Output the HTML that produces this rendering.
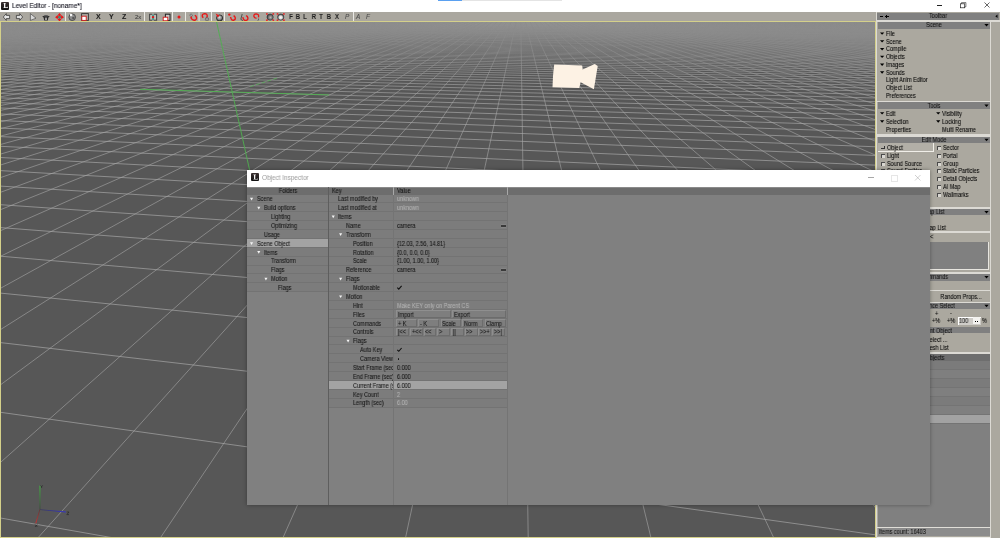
<!DOCTYPE html><html><head><meta charset='utf-8'><style>
html,body{margin:0;padding:0;width:1000px;height:538px;overflow:hidden;background:#fff;}
body{position:relative;font-family:"Liberation Sans",sans-serif;}
.t{position:absolute;white-space:nowrap;line-height:10px;font-family:"Liberation Sans",sans-serif;will-change:transform;-webkit-text-stroke:0.07px currentColor;}
.b{position:absolute;}
svg{position:absolute;left:0;top:0;}
</style></head><body>
<div class=b style='left:0px;top:0px;width:1000px;height:12px;background:#fff;'></div>
<div class=b style='left:437.6px;top:0px;width:24.799999999999955px;height:0.9px;background:#5aa0f0;'></div>
<div class=b style='left:462.4px;top:0px;width:100.0px;height:0.9px;background:#e4e4e4;'></div>
<div class=b style='left:1px;top:1.5px;width:8px;height:8px;background:linear-gradient(#3a3030,#111);border-radius:1px'></div>
<svg width=1000 height=538><path d='M3.4 3 L5.9 3 L5.9 3.5 L5.3 3.6 L5.3 7.3 L7.4 7.3 L7.6 6.6 L7.9 6.6 L7.9 8 L3.4 8 L3.4 7.6 L4 7.5 L4 3.6 L3.4 3.5Z' fill='#f4f4f4'/></svg>
<div class=t style='left:12.00px;top:0.80px;font-size:6.99px;color:#10101c;transform:scaleX(0.93);transform-origin:left;-webkit-text-stroke:0.1px currentColor;'>Level Editor - [noname*]</div>
<div class=b style='left:937px;top:4.9px;width:5px;height:0.6999999999999993px;background:#222;'></div>
<svg width=1000 height=538><rect x='960.4' y='3.8' width='4.3' height='4' fill='none' stroke='#222' stroke-width='0.7'/><path d='M961.5 3.8 L961.5 2.6 L965.9 2.6 L965.9 6.8 L964.7 6.8' fill='none' stroke='#222' stroke-width='0.6'/></svg>
<svg width=1000 height=538 style='left:0;top:0'><path d='M984.5 2.5 L989.5 7.5 M989.5 2.5 L984.5 7.5' stroke='#000' stroke-width='0.6'/></svg>
<div class=b style='left:0px;top:12px;width:877px;height:9px;background:#aaa79f;'></div>
<svg width=1000 height=538><rect x='65.1' y='12' width='0.9' height='9' fill='#f2f1ee'/><rect x='144.1' y='12' width='0.9' height='9' fill='#f2f1ee'/><rect x='172.1' y='12' width='0.9' height='9' fill='#f2f1ee'/><rect x='185.1' y='12' width='0.9' height='9' fill='#f2f1ee'/><rect x='198.6' y='12' width='0.9' height='9' fill='#f2f1ee'/><rect x='211.1' y='12' width='0.9' height='9' fill='#f2f1ee'/><rect x='224.1' y='12' width='0.9' height='9' fill='#f2f1ee'/><rect x='353.1' y='12' width='0.9' height='9' fill='#f2f1ee'/><path d='M3.3 17 L6.3 13.6 L6.3 15.4 L9.6 15.4 L9.6 18.6 L6.3 18.6 L6.3 20.4Z' fill='#e6e6e6' stroke='#2a2a2a' stroke-width='0.7' stroke-linejoin='round'/><path d='M22.7 17 L19.7 13.6 L19.7 15.4 L16.4 15.4 L16.4 18.6 L19.7 18.6 L19.7 20.4Z' fill='#dcdcdc' stroke='#2a2a2a' stroke-width='0.7' stroke-linejoin='round'/><path d='M30.4 13.6 L30.4 20.4 L36 18.2Z' fill='#d8d8d8' stroke='#3a3a3a' stroke-width='0.6' stroke-linejoin='round'/><path d='M42.2 16.6 Q46 14.6 49.8 16.6 L48.4 17.6 L47.8 20.6 L44.2 20.6 L43.6 17.6Z' fill='#2a2a2a'/><rect x='45' y='17.6' width='2' height='2.4' fill='#9a9a9a'/><ellipse cx='46' cy='15.9' rx='2.2' ry='0.7' fill='#555'/><path d='M59.5 13 L61.6 15.4 L60.4 15.4 L60.4 16.3 L61.3 16.3 L61.3 15.1 L63.9 17.2 L61.3 19.3 L61.3 18.1 L60.4 18.1 L60.4 19 L61.6 19 L59.5 21.4 L57.4 19 L58.6 19 L58.6 18.1 L57.7 18.1 L57.7 19.3 L55.1 17.2 L57.7 15.1 L57.7 16.3 L58.6 16.3 L58.6 15.4 L57.4 15.4Z' fill='#e81818'/><circle cx='59.5' cy='17.2' r='1.25' fill='#2a9a8a'/><circle cx='72.2' cy='17.2' r='3.3' fill='#8a8a8a' stroke='#3a3a3a' stroke-width='0.8'/><rect x='70' y='14' width='2.2' height='2.2' fill='#f4f4f4'/><rect x='72.3' y='17' width='2' height='2' fill='#555'/><rect x='81.6' y='13.6' width='6.8' height='6.8' fill='none' stroke='#333' stroke-width='0.9'/><rect x='81.8' y='16.2' width='4.4' height='4.2' fill='#fff' stroke='#d01818' stroke-width='0.9'/></svg>
<div class=t style='left:95.9px;top:12.20px;font-size:7px;font-weight:bold;color:#1e1e1e;'>X</div>
<div class=t style='left:109.1px;top:12.20px;font-size:7px;font-weight:bold;color:#1e1e1e;'>Y</div>
<div class=t style='left:122px;top:12.20px;font-size:7px;font-weight:bold;color:#1e1e1e;'>Z</div>
<div class=t style='left:135px;top:12.30px;font-size:6px;font-weight:bold;color:#3a3a3a;font-weight:normal;'>2x</div>
<svg width=1000 height=538><path d='M152.2 14.2 L149.6 14.2 L149.6 20.2 L152.2 20.2 M153.8 14.2 L156.6 14.2 L156.6 20.2 L153.8 20.2' stroke='#4a4a4a' stroke-width='1.1' fill='none'/><path d='M151.1 15.2 L151.1 19.2 M155.1 15.2 L155.1 19.2' stroke='#d8d8d8' stroke-width='0.8'/><rect x='152.3' y='14.6' width='1.5' height='5.4' fill='#2a9a8a'/><circle cx='153' cy='17.1' r='1.2' fill='#e01818'/><rect x='165.4' y='14.2' width='4.6' height='6.2' fill='#c8c8c8' stroke='#222' stroke-width='1'/><rect x='163.2' y='17.2' width='4.6' height='3.6' fill='#fff' stroke='#d81818' stroke-width='0.9'/><path d='M175.4 17 L182.6 17 M179 13.8 L179 20.6' stroke='#9a9a9a' stroke-width='0.5'/><circle cx='179' cy='16.9' r='1.5' fill='#e81818'/><path d='M189.6 15.2 L191 13.8 L192.6 15.2 L191.4 16.8Z' fill='#a8a8a8' stroke='#555' stroke-width='0.6'/><path d='M191.8 16.6 L190.9 17.8 Q192.5 21.2 195.4 20 Q197.6 18.6 195.8 16 L194.8 15.2' stroke='#e81818' stroke-width='1.4' fill='none'/><path d='M206.2 17.8 L207.2 16.6 Q207.6 13.6 204.6 13.6 Q201.6 14 202.4 16.8 L203.4 17.6' stroke='#e81818' stroke-width='1.4' fill='none'/><circle cx='207' cy='19.2' r='1.7' fill='#9a9a9a' stroke='#555' stroke-width='0.6'/><defs><radialGradient id='sph' cx='0.45' cy='0.4' r='0.6'><stop offset='0' stop-color='#e0e0e0'/><stop offset='0.6' stop-color='#888'/><stop offset='1' stop-color='#333'/></radialGradient><radialGradient id='sph2' cx='0.5' cy='0.55' r='0.55'><stop offset='0' stop-color='#fff'/><stop offset='0.45' stop-color='#ddd'/><stop offset='0.8' stop-color='#555'/><stop offset='1' stop-color='#333'/></radialGradient><radialGradient id='sph3' cx='0.55' cy='0.55' r='0.6'><stop offset='0' stop-color='#bbb'/><stop offset='0.6' stop-color='#666'/><stop offset='1' stop-color='#222'/></radialGradient></defs><circle cx='219.6' cy='18' r='3.1' fill='url(#sph)' stroke='#2a2a2a' stroke-width='0.8'/><path d='M215.6 13.6 L219.6 15.6 L217.6 17.4Z' fill='#e81818'/><circle cx='229.3' cy='14.6' r='1.2' fill='#e81818'/><path d='M230.6 17 Q231.2 20.8 233.8 20.2 Q236.4 19.2 234.6 16.4 L233.6 15.6' stroke='#e81818' stroke-width='1.4' fill='none'/><path d='M242.2 14 L240.8 19.4 L243 20.6' stroke='#3a3a3a' stroke-width='0.8' fill='none'/><path d='M242.8 17.2 Q243.6 21 246.4 20.4 Q249 19.4 247.2 16.4 L246.2 15.4' stroke='#e81818' stroke-width='1.4' fill='none'/><path d='M258.4 17.4 Q259.4 14 256.2 13.8 Q253.4 14 254 16.8 Q254.6 18.4 256.6 18.2' stroke='#e81818' stroke-width='1.3' fill='none'/><path d='M258 18.6 L258.8 19 L257.8 20.8' stroke='#555' stroke-width='0.8' fill='none'/><rect x='266.5' y='13.4' width='7.2' height='7.2' rx='1.5' fill='#bdbdbd' opacity='0.5'/><circle cx='270.1' cy='17.1' r='3.2' fill='url(#sph3)' stroke='#333' stroke-width='0.5'/><circle cx='266.9' cy='13.9' r='0.95' fill='#e82828'/><circle cx='273.3' cy='13.9' r='0.95' fill='#e82828'/><circle cx='266.9' cy='20.3' r='0.95' fill='#e82828'/><circle cx='273.3' cy='20.3' r='0.95' fill='#e82828'/><rect x='277.1' y='13.4' width='7.2' height='7.2' rx='1.5' fill='#bdbdbd' opacity='0.5'/><circle cx='280.7' cy='17.1' r='3.2' fill='url(#sph2)' stroke='#333' stroke-width='0.5'/><circle cx='277.5' cy='13.9' r='0.95' fill='#e82828'/><circle cx='283.9' cy='13.9' r='0.95' fill='#e82828'/><circle cx='277.5' cy='20.3' r='0.95' fill='#e82828'/><circle cx='283.9' cy='20.3' r='0.95' fill='#e82828'/></svg>
<div class=t style='left:281px;width:20px;text-align:center;top:12.2px;font-size:6.6px;font-weight:bold;color:#1e1e1e;transform:scaleX(0.88);'>F</div>
<div class=t style='left:288.2px;width:20px;text-align:center;top:12.2px;font-size:6.6px;font-weight:bold;color:#1e1e1e;transform:scaleX(0.88);'>B</div>
<div class=t style='left:295.2px;width:20px;text-align:center;top:12.2px;font-size:6.6px;font-weight:bold;color:#1e1e1e;transform:scaleX(0.88);'>L</div>
<div class=t style='left:304px;width:20px;text-align:center;top:12.2px;font-size:6.6px;font-weight:bold;color:#1e1e1e;transform:scaleX(0.88);'>R</div>
<div class=t style='left:310.6px;width:20px;text-align:center;top:12.2px;font-size:6.6px;font-weight:bold;color:#1e1e1e;transform:scaleX(0.88);'>T</div>
<div class=t style='left:319px;width:20px;text-align:center;top:12.2px;font-size:6.6px;font-weight:bold;color:#1e1e1e;transform:scaleX(0.88);'>B</div>
<div class=t style='left:326.6px;width:20px;text-align:center;top:12.2px;font-size:6.6px;font-weight:bold;color:#1e1e1e;transform:scaleX(0.88);'>X</div>
<div class=t style='left:345.2px;top:12.40px;font-size:6.4px;font-weight:bold;color:#4a4a4a;font-style:italic;font-weight:normal;'>P</div>
<div class=t style='left:355.6px;top:12.40px;font-size:6.4px;font-weight:bold;color:#4a4a4a;font-style:italic;font-weight:normal;'>A</div>
<div class=t style='left:366px;top:12.40px;font-size:6.4px;font-weight:bold;color:#4a4a4a;font-style:italic;font-weight:normal;'>F</div>
<div class=b style='left:0px;top:21px;width:876px;height:517px;background:#d4d08a;'></div>
<div class=b style='left:1px;top:22px;width:874px;height:515px;background:#575757;'></div>
<div class=b style='left:876px;top:12px;width:1px;height:526px;background:#dcdad4;'></div>
<svg width=1000 height=538 style='left:0;top:0'><defs><clipPath id='vc'><rect x='1' y='22' width='874' height='515'/></clipPath></defs><g clip-path='url(#vc)'><path d='M735.7 21.5L876.5 22.1M699.1 21.5L876.5 22.3M662.6 21.5L876.5 22.5M626.2 21.5L876.5 22.7M590.0 21.5L876.5 22.9M554.0 21.5L876.5 23.0M518.0 21.5L876.5 23.2M482.2 21.5L876.5 23.4M446.6 21.5L876.5 23.6M411.0 21.5L876.5 23.8M375.6 21.5L876.5 24.0M340.4 21.5L876.5 24.2M305.3 21.5L876.5 24.4M270.3 21.5L876.5 24.7M235.4 21.5L876.5 24.9M200.7 21.5L876.5 25.1M166.1 21.5L876.5 25.3M131.6 21.5L876.5 25.5M97.3 21.5L876.5 25.8M63.0 21.5L876.5 26.0M29.0 21.5L876.5 26.3M10.3 21.6L876.5 26.5M6.0 21.8L876.5 26.8M1.6 21.9L876.5 27.0M0.5 22.1L876.5 27.3M0.5 22.3L876.5 27.6M0.5 22.5L876.5 27.8M0.5 22.8L876.5 28.1M0.5 23.0L876.5 28.4M0.5 23.2L876.5 28.7M0.5 23.4L876.5 29.0M0.5 23.7L876.5 29.3M0.5 23.9L876.5 29.6M0.5 24.2L876.5 29.9M0.5 24.4L876.5 30.3M0.5 24.7L876.5 30.6M0.5 24.9L876.5 30.9M0.5 25.2L876.5 31.3M0.5 25.5L876.5 31.6M0.5 25.8L876.5 32.0M0.5 26.0L876.5 32.4M0.5 26.3L876.5 32.8M0.5 26.6L876.5 33.2M0.5 27.0L876.5 33.6M0.5 27.3L876.5 34.0M0.5 27.6L876.5 34.4M0.5 27.9L876.5 34.8M0.5 28.3L876.5 35.3M0.5 28.6L876.5 35.8M0.5 29.0L876.5 36.2M0.5 29.4L876.5 36.7M0.5 29.7L876.5 37.2M0.5 30.1L876.5 37.7M0.5 30.5L876.5 38.2M0.5 31.0L876.5 38.8M0.5 31.4L876.5 39.3M0.5 31.8L876.5 39.9M0.5 32.3L876.5 40.5M0.5 32.8L876.5 41.1M0.5 33.2L876.5 41.8M0.5 33.7L876.5 42.4M0.5 34.3L876.5 43.1M0.5 34.8L876.5 43.8M0.5 35.3L876.5 44.5M0.5 35.9L876.5 45.2M0.5 36.5L876.5 46.0M0.5 37.1L876.5 46.8M0.5 37.7L876.5 47.6M0.5 38.4L876.5 48.5M0.5 39.1L876.5 49.3M0.5 39.8L876.5 50.2M0.5 40.5L876.5 51.2M0.5 41.3L876.5 52.2M0.5 42.1L876.5 53.2M0.5 42.9L876.5 54.3M0.5 43.7L876.5 55.4M0.5 44.6L876.5 56.6M0.5 45.6L876.5 57.8M0.5 46.5L876.5 59.0M0.5 47.5L876.5 60.4M0.5 48.6L876.5 61.8M0.5 49.7L876.5 63.2M0.5 50.9L876.5 64.7M0.5 52.1L876.5 66.3M0.5 53.4L876.5 68.0M0.5 54.8L876.5 69.8M0.5 56.2L876.5 71.7M0.5 57.7L876.5 73.6M0.5 59.3L876.5 75.7M0.5 61.0L876.5 77.9M0.5 62.8L876.5 80.3M0.5 64.7L876.5 82.7M0.5 66.8L876.5 85.4M0.5 69.0L876.5 88.2M0.5 71.3L876.5 91.2M0.5 73.8L876.5 94.5M0.5 76.4L876.5 98.0M0.5 79.3L876.5 101.7M0.5 82.4L876.5 105.8M0.5 85.8L876.5 110.2M0.5 89.5L876.5 114.9M0.5 93.5L876.5 120.1M0.5 97.9L876.5 125.9M0.5 102.7L876.5 132.1M0.5 108.0L876.5 139.1M0.5 114.0L876.5 146.8M0.5 120.6L876.5 155.5M0.5 128.1L876.5 165.2M0.5 136.6L876.5 176.2M0.5 146.3L876.5 188.8M0.5 157.5L876.5 203.4M0.5 170.6L876.5 220.5M0.5 186.1L876.5 240.6M0.5 204.7L876.5 264.9M0.5 227.6L876.5 294.6M0.5 256.2L876.5 331.8M0.5 293.1L876.5 379.9M0.5 342.6L876.5 444.3M0.5 412.3L876.5 535.0M0.5 518.0L111.2 537.5' stroke='#b4b4b4' stroke-width='0.6' fill='none'/><path d='M12.5 21.5L0.5 22.0M16.9 21.5L0.5 22.2M21.3 21.5L0.5 22.3M25.6 21.5L0.5 22.5M30.0 21.5L0.5 22.7M34.4 21.5L0.5 22.9M38.8 21.5L0.5 23.1M43.2 21.5L0.5 23.3M47.6 21.5L0.5 23.5M52.0 21.5L0.5 23.7M56.4 21.5L0.5 23.9M60.8 21.5L0.5 24.1M65.2 21.5L0.5 24.4M69.6 21.5L0.5 24.6M74.0 21.5L0.5 24.8M78.4 21.5L0.5 25.1M82.8 21.5L0.5 25.3M87.2 21.5L0.5 25.5M91.6 21.5L0.5 25.8M96.0 21.5L0.5 26.0M100.4 21.5L0.5 26.3M104.9 21.5L0.5 26.6M109.3 21.5L0.5 26.8M113.7 21.5L0.5 27.1M118.1 21.5L0.5 27.4M122.6 21.5L0.5 27.7M127.0 21.5L0.5 28.0M131.4 21.5L0.5 28.3M135.9 21.5L0.5 28.6M140.3 21.5L0.5 28.9M144.7 21.5L0.5 29.3M149.2 21.5L0.5 29.6M153.6 21.5L0.5 29.9M158.1 21.5L0.5 30.3M162.5 21.5L0.5 30.6M167.0 21.5L0.5 31.0M171.4 21.5L0.5 31.4M175.9 21.5L0.5 31.8M180.3 21.5L0.5 32.2M184.8 21.5L0.5 32.6M189.2 21.5L0.5 33.0M193.7 21.5L0.5 33.5M198.2 21.5L0.5 33.9M202.6 21.5L0.5 34.4M207.1 21.5L0.5 34.8M211.6 21.5L0.5 35.3M216.0 21.5L0.5 35.8M220.5 21.5L0.5 36.3M225.0 21.5L0.5 36.9M229.5 21.5L0.5 37.4M234.0 21.5L0.5 38.0M238.4 21.5L0.5 38.6M242.9 21.5L0.5 39.2M247.4 21.5L0.5 39.8M251.9 21.5L0.5 40.4M256.4 21.5L0.5 41.1M260.9 21.5L0.5 41.8M265.4 21.5L0.5 42.5M269.9 21.5L0.5 43.2M274.4 21.5L0.5 44.0M278.9 21.5L0.5 44.8M283.4 21.5L0.5 45.6M287.9 21.5L0.5 46.5M292.4 21.5L0.5 47.4M296.9 21.5L0.5 48.3M301.4 21.5L0.5 49.3M306.0 21.5L0.5 50.3M310.5 21.5L0.5 51.3M315.0 21.5L0.5 52.4M319.5 21.5L0.5 53.6M324.0 21.5L0.5 54.8M328.6 21.5L0.5 56.1M333.1 21.5L0.5 57.4M337.6 21.5L0.5 58.8M342.2 21.5L0.5 60.2M346.7 21.5L0.5 61.8M351.2 21.5L0.5 63.4M355.8 21.5L0.5 65.1M360.3 21.5L0.5 66.9M364.9 21.5L0.5 68.8M369.4 21.5L0.5 70.9M374.0 21.5L0.5 73.0M378.5 21.5L0.5 75.3M383.1 21.5L0.5 77.8M387.6 21.5L0.5 80.4M392.2 21.5L0.5 83.2M396.8 21.5L0.5 86.3M401.3 21.5L0.5 89.5M405.9 21.5L0.5 93.0M410.5 21.5L0.5 96.8M415.0 21.5L0.5 101.0M419.6 21.5L0.5 105.5M424.2 21.5L0.5 110.4M428.7 21.5L0.5 115.9M433.3 21.5L0.5 121.9M437.9 21.5L0.5 128.6M442.5 21.5L0.5 136.1M447.1 21.5L0.5 144.5M451.7 21.5L0.5 154.1M456.3 21.5L0.5 165.0M460.8 21.5L0.5 177.6M465.4 21.5L0.5 192.3M470.0 21.5L0.5 209.7M474.6 21.5L0.5 230.7M479.2 21.5L0.5 256.3M483.8 21.5L0.5 288.3M488.4 21.5L0.5 329.6M493.1 21.5L0.5 384.8M497.7 21.5L0.5 462.4M502.3 21.5L38.2 537.5M506.9 21.5L160.6 537.5M511.5 21.5L283.1 537.5M516.1 21.5L405.6 537.5M520.8 21.5L528.2 537.5M525.4 21.5L650.9 537.5M530.0 21.5L773.6 537.5M534.6 21.5L876.5 509.2M539.3 21.5L876.5 384.1M543.9 21.5L876.5 308.4M548.5 21.5L876.5 257.7M553.2 21.5L876.5 221.3M557.8 21.5L876.5 194.0M562.5 21.5L876.5 172.7M567.1 21.5L876.5 155.6M571.7 21.5L876.5 141.6M576.4 21.5L876.5 130.0M581.0 21.5L876.5 120.1M585.7 21.5L876.5 111.6M590.4 21.5L876.5 104.3M595.0 21.5L876.5 97.8M599.7 21.5L876.5 92.1M604.3 21.5L876.5 87.1M609.0 21.5L876.5 82.6M613.7 21.5L876.5 78.5M618.3 21.5L876.5 74.8M623.0 21.5L876.5 71.5M627.7 21.5L876.5 68.4M632.4 21.5L876.5 65.6M637.1 21.5L876.5 63.0M641.7 21.5L876.5 60.6M646.4 21.5L876.5 58.4M651.1 21.5L876.5 56.4M655.8 21.5L876.5 54.5M660.5 21.5L876.5 52.7M665.2 21.5L876.5 51.0M669.9 21.5L876.5 49.5M674.6 21.5L876.5 48.0M679.3 21.5L876.5 46.6M684.0 21.5L876.5 45.3M688.7 21.5L876.5 44.1M693.4 21.5L876.5 42.9M698.1 21.5L876.5 41.8M702.8 21.5L876.5 40.8M707.5 21.5L876.5 39.8M712.2 21.5L876.5 38.8M717.0 21.5L876.5 37.9M721.7 21.5L876.5 37.1M726.4 21.5L876.5 36.2M731.1 21.5L876.5 35.4M735.9 21.5L876.5 34.7M740.8 21.5L876.5 34.0M745.8 21.5L876.5 33.3M750.8 21.6L876.5 32.6M755.9 21.6L876.5 32.0M760.9 21.6L876.5 31.4M765.9 21.6L876.5 30.8M771.0 21.7L876.5 30.2M776.1 21.7L876.5 29.7M781.2 21.7L876.5 29.2M786.3 21.7L876.5 28.7M791.4 21.8L876.5 28.2M796.5 21.8L876.5 27.7M801.6 21.8L876.5 27.3M806.8 21.8L876.5 26.8M812.0 21.8L876.5 26.4M817.2 21.9L876.5 26.0M822.4 21.9L876.5 25.6M827.6 21.9L876.5 25.2M832.8 21.9L876.5 24.8M838.1 22.0L876.5 24.5M843.3 22.0L876.5 24.1M848.6 22.0L876.5 23.8M853.9 22.0L876.5 23.4M859.2 22.1L876.5 23.1M864.5 22.1L876.5 22.8M869.8 22.1L876.5 22.5M875.2 22.1L876.5 22.2' stroke='#a8a8a8' stroke-width='0.6' fill='none'/><defs><linearGradient id='fog' x1='0' y1='0' x2='0' y2='1'><stop offset='0' stop-color='#575757' stop-opacity='0.36'/><stop offset='0.27' stop-color='#575757' stop-opacity='0.33'/><stop offset='0.55' stop-color='#575757' stop-opacity='0.2'/><stop offset='0.85' stop-color='#575757' stop-opacity='0.05'/><stop offset='1' stop-color='#575757' stop-opacity='0'/></linearGradient></defs><rect x='1' y='22' width='874' height='88' fill='url(#fog)'/><path d='M216.6 22 L249.6 170 M140.1 89.3 L328.9 94.9' stroke='#4fb04f' stroke-width='0.9' fill='none'/><path d='M250.2 86.7 L278 77.8' stroke='#4fb04f' stroke-width='0.7' fill='none' stroke-dasharray='4 2'/><polygon points='554.2,64.6 582.2,65.5 582.6,69.6 594.8,64 597.7,65.9 593.9,89.3 580.6,82.2 579.3,88 552.5,87.2 553,76' fill='#fdf2e4'/><defs><linearGradient id='gy' x1='0' y1='1' x2='0' y2='0'><stop offset='0' stop-color='#3a4a3a'/><stop offset='1' stop-color='#40c040'/></linearGradient><linearGradient id='gb' x1='0' y1='0' x2='1' y2='0'><stop offset='0' stop-color='#3a3a5a'/><stop offset='1' stop-color='#3030d0'/></linearGradient><linearGradient id='gr' x1='0' y1='0' x2='0' y2='1'><stop offset='0' stop-color='#5a3a3a'/><stop offset='1' stop-color='#d03030'/></linearGradient></defs><rect x='39.5' y='485.6' width='0.9' height='23.7' fill='url(#gy)'/><path d='M39.9 509.3 L65.9 511.6 L65.9 512.4 L39.9 510.1Z' fill='url(#gb)'/><path d='M39.5 509.3 L40.3 509.5 L36.2 523.4 L35.3 523.2Z' fill='url(#gr)'/><path d='M40.6 485.4 L41.6 486.8 L42.6 485.4 M41.6 486.8 L41.6 488' stroke='#222' stroke-width='0.6' fill='none'/><path d='M66.8 512 L69 512 L66.8 514.6 L69 514.6' stroke='#222' stroke-width='0.6' fill='none'/><path d='M35 524.4 L37.4 527 M37.4 524.4 L35 527' stroke='#222' stroke-width='0.6' fill='none'/></g></svg>
<div class=b style='left:877px;top:12px;width:123px;height:526px;background:#aba89f;'></div>
<div class=b style='left:877px;top:12px;width:123px;height:1px;background:#aba89f;'></div>
<div class=b style='left:877px;top:13px;width:122px;height:6.5px;background:#808080;'></div>
<div class=t style='left:888.00px;width:100px;text-align:center;top:11.35px;font-size:6.47px;color:#111;transform:scaleX(0.85);transform-origin:center;'>Toolbar</div>
<div class=b style='left:880px;top:16px;width:3px;height:0.6999999999999993px;background:#000;'></div>
<div class=b style='left:885px;top:16px;width:3.5px;height:0.6999999999999993px;background:#000;'></div>
<div class=b style='left:886.4px;top:14.6px;width:0.7000000000000455px;height:3.5000000000000018px;background:#000;'></div>
<svg width=1000 height=538><path d='M997.5 14.4 L997.5 18 L995.3 16.2Z' fill='#000'/></svg>
<div class=b style='left:877px;top:19.5px;width:123px;height:2.0px;background:#dcdad4;'></div>
<div class=b style='left:990px;top:21.5px;width:1px;height:516.5px;background:#dcdad4;'></div>
<div class=b style='left:878px;top:22px;width:112px;height:6.5px;background:#808080;'></div>
<div class=t style='left:884.00px;width:100px;text-align:center;top:20.35px;font-size:6.47px;color:#111;transform:scaleX(0.85);transform-origin:center;'>Scene</div>
<svg width=1000 height=538><path d='M984.4 24.0 L988.7 24.0 L986.5 26.5Z' fill='#000'/></svg>
<svg width=1000 height=538><path d='M880.0 32.4 L884.3 32.4 L882.1 34.8Z' fill='#000'/></svg>
<div class=t style='left:885.60px;top:28.80px;font-size:6.47px;color:#000;transform:scaleX(0.85);transform-origin:left;'>File</div>
<svg width=1000 height=538><path d='M880.0 40.2 L884.3 40.2 L882.1 42.6Z' fill='#000'/></svg>
<div class=t style='left:885.60px;top:36.58px;font-size:6.47px;color:#000;transform:scaleX(0.85);transform-origin:left;'>Scene</div>
<svg width=1000 height=538><path d='M880.0 48.0 L884.3 48.0 L882.1 50.4Z' fill='#000'/></svg>
<div class=t style='left:885.60px;top:44.36px;font-size:6.47px;color:#000;transform:scaleX(0.85);transform-origin:left;'>Compile</div>
<svg width=1000 height=538><path d='M880.0 55.7 L884.3 55.7 L882.1 58.1Z' fill='#000'/></svg>
<div class=t style='left:885.60px;top:52.14px;font-size:6.47px;color:#000;transform:scaleX(0.85);transform-origin:left;'>Objects</div>
<svg width=1000 height=538><path d='M880.0 63.5 L884.3 63.5 L882.1 65.9Z' fill='#000'/></svg>
<div class=t style='left:885.60px;top:59.92px;font-size:6.47px;color:#000;transform:scaleX(0.85);transform-origin:left;'>Images</div>
<svg width=1000 height=538><path d='M880.0 71.3 L884.3 71.3 L882.1 73.7Z' fill='#000'/></svg>
<div class=t style='left:885.60px;top:67.70px;font-size:6.47px;color:#000;transform:scaleX(0.85);transform-origin:left;'>Sounds</div>
<div class=t style='left:885.60px;top:75.48px;font-size:6.47px;color:#000;transform:scaleX(0.85);transform-origin:left;'>Light Anim Editor</div>
<div class=t style='left:885.60px;top:83.26px;font-size:6.47px;color:#000;transform:scaleX(0.85);transform-origin:left;'>Object List</div>
<div class=t style='left:885.60px;top:91.04px;font-size:6.47px;color:#000;transform:scaleX(0.85);transform-origin:left;'>Preferences</div>
<div class=b style='left:877px;top:101px;width:113px;height:1.4000000000000057px;background:#dcdad4;'></div>
<div class=b style='left:878px;top:102.4px;width:112px;height:6.199999999999989px;background:#808080;'></div>
<div class=t style='left:884.00px;width:100px;text-align:center;top:100.60px;font-size:6.47px;color:#111;transform:scaleX(0.85);transform-origin:center;'>Tools</div>
<svg width=1000 height=538><path d='M984.4 104.4 L988.7 104.4 L986.5 106.9Z' fill='#000'/></svg>
<svg width=1000 height=538><path d='M880.0 112.2 L884.3 112.2 L882.1 114.6Z' fill='#000'/></svg>
<div class=t style='left:885.80px;top:108.60px;font-size:6.47px;color:#000;transform:scaleX(0.85);transform-origin:left;'>Edit</div>
<svg width=1000 height=538><path d='M936.1 112.2 L940.4 112.2 L938.2 114.6Z' fill='#000'/></svg>
<div class=t style='left:941.90px;top:108.60px;font-size:6.47px;color:#000;transform:scaleX(0.85);transform-origin:left;'>Visibility</div>
<svg width=1000 height=538><path d='M880.0 120.3 L884.3 120.3 L882.1 122.8Z' fill='#000'/></svg>
<div class=t style='left:885.80px;top:116.75px;font-size:6.47px;color:#000;transform:scaleX(0.85);transform-origin:left;'>Selection</div>
<svg width=1000 height=538><path d='M936.1 120.3 L940.4 120.3 L938.2 122.8Z' fill='#000'/></svg>
<div class=t style='left:941.90px;top:116.75px;font-size:6.47px;color:#000;transform:scaleX(0.85);transform-origin:left;'>Locking</div>
<div class=t style='left:885.80px;top:124.90px;font-size:6.47px;color:#000;transform:scaleX(0.85);transform-origin:left;'>Properties</div>
<div class=t style='left:941.90px;top:124.90px;font-size:6.47px;color:#000;transform:scaleX(0.85);transform-origin:left;'>Multi Rename</div>
<div class=b style='left:877px;top:134.4px;width:113px;height:2.299999999999983px;background:#dcdad4;'></div>
<div class=b style='left:878px;top:136.7px;width:112px;height:5.900000000000006px;background:#808080;'></div>
<div class=t style='left:884.00px;width:100px;text-align:center;top:134.75px;font-size:6.47px;color:#111;transform:scaleX(0.85);transform-origin:center;'>Edit Mode</div>
<svg width=1000 height=538><path d='M984.4 138.7 L988.7 138.7 L986.5 141.2Z' fill='#000'/></svg>
<div class=b style='left:878px;top:143px;width:55.60000000000002px;height:8.800000000000011px;background:#b2afa7;border-right:0.7px solid #f0eee8;border-bottom:0.7px solid #f0eee8;box-sizing:border-box;'></div>
<div class=b style='left:881px;top:147.5px;width:3.5px;height:0.799999999999983px;background:#333;'></div>
<div class=b style='left:883.8px;top:145.9px;width:0.7000000000000455px;height:2.3999999999999773px;background:#333;'></div>
<div class=t style='left:887.20px;top:143.10px;font-size:6.47px;color:#000;transform:scaleX(0.85);transform-origin:left;'>Object</div>
<div class=b style='left:936.9px;top:146.10px;width:4px;height:4px;background:#d9d7d1;border-top:0.8px solid #4a4a4a;border-left:0.8px solid #4a4a4a;box-sizing:border-box'></div>
<div class=t style='left:943.40px;top:143.10px;font-size:6.47px;color:#000;transform:scaleX(0.85);transform-origin:left;'>Sector</div>
<div class=b style='left:880.8px;top:153.88px;width:4px;height:4px;background:#d9d7d1;border-top:0.8px solid #4a4a4a;border-left:0.8px solid #4a4a4a;box-sizing:border-box'></div>
<div class=t style='left:887.00px;top:150.88px;font-size:6.47px;color:#000;transform:scaleX(0.85);transform-origin:left;'>Light</div>
<div class=b style='left:936.9px;top:153.88px;width:4px;height:4px;background:#d9d7d1;border-top:0.8px solid #4a4a4a;border-left:0.8px solid #4a4a4a;box-sizing:border-box'></div>
<div class=t style='left:943.40px;top:150.88px;font-size:6.47px;color:#000;transform:scaleX(0.85);transform-origin:left;'>Portal</div>
<div class=b style='left:880.8px;top:161.66px;width:4px;height:4px;background:#d9d7d1;border-top:0.8px solid #4a4a4a;border-left:0.8px solid #4a4a4a;box-sizing:border-box'></div>
<div class=t style='left:887.00px;top:158.66px;font-size:6.47px;color:#000;transform:scaleX(0.85);transform-origin:left;'>Sound Source</div>
<div class=b style='left:936.9px;top:161.66px;width:4px;height:4px;background:#d9d7d1;border-top:0.8px solid #4a4a4a;border-left:0.8px solid #4a4a4a;box-sizing:border-box'></div>
<div class=t style='left:943.40px;top:158.66px;font-size:6.47px;color:#000;transform:scaleX(0.85);transform-origin:left;'>Group</div>
<div class=b style='left:880.8px;top:169.44px;width:4px;height:4px;background:#d9d7d1;border-top:0.8px solid #4a4a4a;border-left:0.8px solid #4a4a4a;box-sizing:border-box'></div>
<div class=t style='left:887.00px;top:166.44px;font-size:6.47px;color:#000;transform:scaleX(0.85);transform-origin:left;'>Sound Emitter</div>
<div class=b style='left:936.9px;top:169.44px;width:4px;height:4px;background:#d9d7d1;border-top:0.8px solid #4a4a4a;border-left:0.8px solid #4a4a4a;box-sizing:border-box'></div>
<div class=t style='left:943.40px;top:166.44px;font-size:6.47px;color:#000;transform:scaleX(0.85);transform-origin:left;'>Static Particles</div>
<div class=b style='left:880.8px;top:177.22px;width:4px;height:4px;background:#d9d7d1;border-top:0.8px solid #4a4a4a;border-left:0.8px solid #4a4a4a;box-sizing:border-box'></div>
<div class=t style='left:887.00px;top:174.22px;font-size:6.47px;color:#000;transform:scaleX(0.85);transform-origin:left;'>Camera</div>
<div class=b style='left:936.9px;top:177.22px;width:4px;height:4px;background:#d9d7d1;border-top:0.8px solid #4a4a4a;border-left:0.8px solid #4a4a4a;box-sizing:border-box'></div>
<div class=t style='left:943.40px;top:174.22px;font-size:6.47px;color:#000;transform:scaleX(0.85);transform-origin:left;'>Detail Objects</div>
<div class=b style='left:880.8px;top:185.00px;width:4px;height:4px;background:#d9d7d1;border-top:0.8px solid #4a4a4a;border-left:0.8px solid #4a4a4a;box-sizing:border-box'></div>
<div class=t style='left:887.00px;top:182.00px;font-size:6.47px;color:#000;transform:scaleX(0.85);transform-origin:left;'>Trigger</div>
<div class=b style='left:936.9px;top:185.00px;width:4px;height:4px;background:#d9d7d1;border-top:0.8px solid #4a4a4a;border-left:0.8px solid #4a4a4a;box-sizing:border-box'></div>
<div class=t style='left:943.40px;top:182.00px;font-size:6.47px;color:#000;transform:scaleX(0.85);transform-origin:left;'>AI Map</div>
<div class=b style='left:880.8px;top:192.78px;width:4px;height:4px;background:#d9d7d1;border-top:0.8px solid #4a4a4a;border-left:0.8px solid #4a4a4a;box-sizing:border-box'></div>
<div class=t style='left:887.00px;top:189.78px;font-size:6.47px;color:#000;transform:scaleX(0.85);transform-origin:left;'>Path</div>
<div class=b style='left:936.9px;top:192.78px;width:4px;height:4px;background:#d9d7d1;border-top:0.8px solid #4a4a4a;border-left:0.8px solid #4a4a4a;box-sizing:border-box'></div>
<div class=t style='left:943.40px;top:189.78px;font-size:6.47px;color:#000;transform:scaleX(0.85);transform-origin:left;'>Wallmarks</div>
<div class=b style='left:877px;top:206.7px;width:113px;height:2.3000000000000114px;background:#dcdad4;'></div>
<div class=b style='left:878px;top:209px;width:112px;height:6px;background:#808080;'></div>
<div class=t style='left:884.00px;width:100px;text-align:center;top:207.10px;font-size:6.47px;color:#111;transform:scaleX(0.85);transform-origin:center;'>Map List</div>
<svg width=1000 height=538><path d='M984.4 211.0 L988.7 211.0 L986.5 213.5Z' fill='#000'/></svg>
<div class=t style='left:925.40px;top:223.00px;font-size:6.47px;color:#000;transform:scaleX(0.85);transform-origin:left;'>Map List</div>
<div class=b style='left:877px;top:231px;width:113px;height:2px;background:#dcdad4;'></div>
<div class=t style='left:929.50px;top:232.30px;font-size:6.47px;color:#000;transform:scaleX(0.85);transform-origin:left;'>&lt;</div>
<div class=b style='left:878px;top:242px;width:111px;height:28px;background:#808080;border-right:0.8px solid #e8e6e0;border-bottom:0.8px solid #e8e6e0;box-sizing:border-box'></div>
<div class=b style='left:877px;top:271.5px;width:113px;height:2.5px;background:#dcdad4;'></div>
<div class=b style='left:878px;top:274px;width:112px;height:6.699999999999989px;background:#808080;'></div>
<div class=t style='left:884.00px;width:100px;text-align:center;top:272.45px;font-size:6.47px;color:#111;transform:scaleX(0.85);transform-origin:center;'>Commands</div>
<svg width=1000 height=538><path d='M984.4 276.0 L988.7 276.0 L986.5 278.5Z' fill='#000'/></svg>
<div class=b style='left:877px;top:290.3px;width:113px;height:1.1999999999999886px;background:#dcdad4;'></div>
<div class=t style='left:910.50px;width:100px;text-align:center;top:292.00px;font-size:6.47px;color:#000;transform:scaleX(0.85);transform-origin:center;'>Random Props...</div>
<div class=b style='left:877px;top:301.8px;width:113px;height:1.0px;background:#dcdad4;'></div>
<div class=b style='left:878px;top:302.8px;width:112px;height:6.199999999999989px;background:#808080;'></div>
<div class=t style='left:885.50px;width:100px;text-align:center;top:301.00px;font-size:6.47px;color:#111;transform:scaleX(0.85);transform-origin:center;'>Instance Select</div>
<svg width=1000 height=538><path d='M984.4 304.8 L988.7 304.8 L986.5 307.3Z' fill='#000'/></svg>
<div class=t style='left:935.00px;top:309.00px;font-size:6.47px;color:#000;transform:scaleX(0.85);transform-origin:left;'>+</div>
<div class=t style='left:950.00px;top:308.20px;font-size:6.47px;color:#000;transform:scaleX(0.85);transform-origin:left;'>-</div>
<div class=t style='left:931.80px;top:316.00px;font-size:6.47px;color:#000;transform:scaleX(0.85);transform-origin:left;'>+%</div>
<div class=t style='left:946.80px;top:316.00px;font-size:6.47px;color:#000;transform:scaleX(0.85);transform-origin:left;'>+%</div>
<div class=b style='left:957.5px;top:316.5px;width:23.5px;height:8.5px;background:#cfcdc8;border-top:0.7px solid #fff;border-left:0.7px solid #fff;box-sizing:border-box'></div>
<div class=t style='left:958.50px;top:316.00px;font-size:6.47px;color:#222;transform:scaleX(0.85);transform-origin:left;'>100</div>
<div class=b style='left:973px;top:317.3px;width:6.7000000000000455px;height:6.899999999999977px;background:#f4f3f0;'></div>
<div class=b style='left:975px;top:320.5px;width:0.7999999999999545px;height:0.8999999999999773px;background:#000;'></div>
<div class=b style='left:977px;top:320.5px;width:0.7999999999999545px;height:0.8999999999999773px;background:#000;'></div>
<div class=t style='left:982.00px;top:316.00px;font-size:6.47px;color:#000;transform:scaleX(0.85);transform-origin:left;'>%</div>
<div class=b style='left:877px;top:326.5px;width:113px;height:0.8999999999999773px;background:#dcdad4;'></div>
<div class=b style='left:878px;top:327.4px;width:112px;height:6.100000000000023px;background:#808080;'></div>
<div class=t style='left:884.00px;width:100px;text-align:center;top:325.55px;font-size:6.47px;color:#111;transform:scaleX(0.85);transform-origin:center;'>Current Object</div>
<div class=t style='left:926.30px;top:335.00px;font-size:6.47px;color:#000;transform:scaleX(0.85);transform-origin:left;'>Select ...</div>
<div class=t style='left:925.40px;top:342.50px;font-size:6.47px;color:#000;transform:scaleX(0.85);transform-origin:left;'>Mesh List</div>
<div class=b style='left:877px;top:352px;width:113px;height:2px;background:#dcdad4;'></div>
<div class=b style='left:878px;top:354px;width:111.5px;height:173px;background:#808080;'></div>
<div class=b style='left:878px;top:354px;width:111.5px;height:7px;background:#6e6e6e;'></div>
<div class=t style='left:885.00px;width:100px;text-align:center;top:352.60px;font-size:6.47px;color:#111;transform:scaleX(0.85);transform-origin:center;'>Objects</div>
<div class=b style='left:878px;top:361.0px;width:111.5px;height:8.899999999999977px;background:#7b7b7b;border-bottom:0.6px solid #747474;box-sizing:border-box'></div>
<div class=b style='left:878px;top:370.0px;width:111.5px;height:8.899999999999977px;background:#7f7f7f;border-bottom:0.6px solid #747474;box-sizing:border-box'></div>
<div class=b style='left:878px;top:379.0px;width:111.5px;height:8.899999999999977px;background:#7b7b7b;border-bottom:0.6px solid #747474;box-sizing:border-box'></div>
<div class=b style='left:878px;top:388.0px;width:111.5px;height:8.899999999999977px;background:#7f7f7f;border-bottom:0.6px solid #747474;box-sizing:border-box'></div>
<div class=b style='left:878px;top:397.0px;width:111.5px;height:8.899999999999977px;background:#7b7b7b;border-bottom:0.6px solid #747474;box-sizing:border-box'></div>
<div class=b style='left:878px;top:406.0px;width:111.5px;height:8.899999999999977px;background:#7f7f7f;border-bottom:0.6px solid #747474;box-sizing:border-box'></div>
<div class=b style='left:878px;top:415.0px;width:111.5px;height:8.899999999999977px;background:#a2a2a2;border-bottom:0.6px solid #747474;box-sizing:border-box'></div>
<div class=b style='left:877px;top:527px;width:113px;height:1.2000000000000455px;background:#e0ded8;'></div>
<div class=b style='left:878px;top:528.2px;width:111.5px;height:8.299999999999955px;background:#8c8c8c;'></div>
<div class=t style='left:879.00px;top:527.40px;font-size:6.47px;color:#111;transform:scaleX(0.85);transform-origin:left;'>Items count: 16403</div>
<div class=b style='left:877px;top:536.8px;width:113px;height:1.2000000000000455px;background:#eeeeea;'></div>
<div class=b style='left:247px;top:170px;width:683px;height:335px;background:#808080;box-shadow:0 0 4px rgba(0,0,0,0.35);'></div>
<div class=b style='left:247px;top:170px;width:683px;height:16.5px;background:#fff;'></div>
<div class=b style='left:251px;top:173px;width:8px;height:8px;background:linear-gradient(#3a3030,#111);border-radius:1px'></div>
<svg width=1000 height=538><path d='M253.4 174.6 L255.9 174.6 L255.9 175.1 L255.3 175.2 L255.3 178.9 L257.4 178.9 L257.6 178.2 L257.9 178.2 L257.9 179.6 L253.4 179.6 L253.4 179.2 L254 179.1 L254 175.2 L253.4 175.1Z' fill='#f4f4f4'/></svg>
<div class=t style='left:262.00px;top:173.20px;font-size:6.60px;color:#a0a0a0;transform:scaleX(0.97);transform-origin:left;-webkit-text-stroke:0.05px currentColor;'>Object Inspector</div>
<div class=b style='left:868px;top:177.3px;width:5.5px;height:0.5px;background:#a8a8a8;'></div>
<div class=b style='left:891px;top:175px;width:4.5px;height:4.5px;border:0.5px solid #e6e6e6;'></div>
<svg width=1000 height=538><path d='M915 175 L920.5 180.5 M920.5 175 L915 180.5' stroke='#a0a0a0' stroke-width='0.5'/></svg>
<div class=b style='left:247px;top:186.5px;width:81px;height:8.0px;background:#6d6d6d;'></div>
<div class=b style='left:247px;top:186.5px;width:81px;height:0.6999999999999886px;background:#8a8a8a;'></div>
<div class=t style='left:237.50px;width:100px;text-align:center;top:186.00px;font-size:6.47px;color:#111;transform:scaleX(0.85);transform-origin:center;'>Folders</div>
<div class=b style='left:247px;top:194.5px;width:80.5px;height:8.875px;background:#7c7c7c;border-bottom:0.6px solid #737373;box-sizing:border-box;'></div>
<svg width=1000 height=538><path d='M250.0 197.8 L253.1 197.8 L251.6 200.5Z' fill='#f4f4f4'/></svg>
<div class=t style='left:256.50px;top:194.35px;font-size:6.47px;color:#151515;transform:scaleX(0.85);transform-origin:left;'>Scene</div>
<div class=b style='left:247px;top:203.375px;width:80.5px;height:8.875px;background:#7c7c7c;border-bottom:0.6px solid #737373;box-sizing:border-box;'></div>
<svg width=1000 height=538><path d='M257.2 206.7 L260.3 206.7 L258.8 209.4Z' fill='#f4f4f4'/></svg>
<div class=t style='left:263.70px;top:203.22px;font-size:6.47px;color:#151515;transform:scaleX(0.85);transform-origin:left;'>Build options</div>
<div class=b style='left:247px;top:212.25px;width:80.5px;height:8.875px;background:#7c7c7c;border-bottom:0.6px solid #737373;box-sizing:border-box;'></div>
<div class=t style='left:270.90px;top:212.10px;font-size:6.47px;color:#151515;transform:scaleX(0.85);transform-origin:left;'>Lighting</div>
<div class=b style='left:247px;top:221.125px;width:80.5px;height:8.875px;background:#7c7c7c;border-bottom:0.6px solid #737373;box-sizing:border-box;'></div>
<div class=t style='left:270.90px;top:220.97px;font-size:6.47px;color:#151515;transform:scaleX(0.85);transform-origin:left;'>Optimizing</div>
<div class=b style='left:247px;top:230.0px;width:80.5px;height:8.875px;background:#7c7c7c;border-bottom:0.6px solid #737373;box-sizing:border-box;'></div>
<div class=t style='left:263.70px;top:229.85px;font-size:6.47px;color:#151515;transform:scaleX(0.85);transform-origin:left;'>Usage</div>
<div class=b style='left:247px;top:238.875px;width:80.5px;height:8.875px;background:#a3a3a3;border-bottom:0.6px solid #737373;box-sizing:border-box;'></div>
<svg width=1000 height=538><path d='M250.0 242.2 L253.1 242.2 L251.6 244.9Z' fill='#f4f4f4'/></svg>
<div class=t style='left:256.50px;top:238.72px;font-size:6.47px;color:#151515;transform:scaleX(0.85);transform-origin:left;'>Scene Object</div>
<div class=b style='left:247px;top:247.75px;width:80.5px;height:8.875px;background:#7c7c7c;border-bottom:0.6px solid #737373;box-sizing:border-box;'></div>
<svg width=1000 height=538><path d='M257.2 251.1 L260.3 251.1 L258.8 253.8Z' fill='#f4f4f4'/></svg>
<div class=t style='left:263.70px;top:247.60px;font-size:6.47px;color:#151515;transform:scaleX(0.85);transform-origin:left;'>Items</div>
<div class=b style='left:247px;top:256.625px;width:80.5px;height:8.875px;background:#7c7c7c;border-bottom:0.6px solid #737373;box-sizing:border-box;'></div>
<div class=t style='left:270.90px;top:256.48px;font-size:6.47px;color:#151515;transform:scaleX(0.85);transform-origin:left;'>Transform</div>
<div class=b style='left:247px;top:265.5px;width:80.5px;height:8.875px;background:#7c7c7c;border-bottom:0.6px solid #737373;box-sizing:border-box;'></div>
<div class=t style='left:270.90px;top:265.35px;font-size:6.47px;color:#151515;transform:scaleX(0.85);transform-origin:left;'>Flags</div>
<div class=b style='left:247px;top:274.375px;width:80.5px;height:8.875px;background:#7c7c7c;border-bottom:0.6px solid #737373;box-sizing:border-box;'></div>
<svg width=1000 height=538><path d='M264.4 277.7 L267.5 277.7 L265.9 280.4Z' fill='#f4f4f4'/></svg>
<div class=t style='left:270.90px;top:274.23px;font-size:6.47px;color:#151515;transform:scaleX(0.85);transform-origin:left;'>Motion</div>
<div class=b style='left:247px;top:283.25px;width:80.5px;height:8.875px;background:#7c7c7c;border-bottom:0.6px solid #737373;box-sizing:border-box;'></div>
<div class=t style='left:278.10px;top:283.10px;font-size:6.47px;color:#151515;transform:scaleX(0.85);transform-origin:left;'>Flags</div>
<div class=b style='left:327.5px;top:186.5px;width:1.8000000000000114px;height:318.5px;background:#5e5e5e;'></div>
<div class=b style='left:329.3px;top:186.5px;width:600.7px;height:8.0px;background:#6d6d6d;'></div>
<div class=b style='left:329.3px;top:186.5px;width:600.7px;height:0.6999999999999886px;background:#8a8a8a;'></div>
<div class=b style='left:393.3px;top:186.5px;width:0.8000000000000114px;height:8.0px;background:#a8a8a8;'></div>
<div class=b style='left:507.2px;top:186.5px;width:0.8000000000000114px;height:8.0px;background:#a8a8a8;'></div>
<div class=t style='left:331.50px;top:186.00px;font-size:6.47px;color:#111;transform:scaleX(0.85);transform-origin:left;'>Key</div>
<div class=t style='left:396.50px;top:186.00px;font-size:6.47px;color:#111;transform:scaleX(0.85);transform-origin:left;'>Value</div>
<div class=b style='left:329.3px;top:194.5px;width:178.2px;height:8.875px;background:#7c7c7c;border-bottom:0.6px solid #737373;box-sizing:border-box;'></div>
<div class=b style='left:337.2px;top:194.5px;width:56.10px;height:8.875px;overflow:hidden'><div class=t style='left:1px;top:-0.15px;font-size:6.47px;color:#151515;transform:scaleX(0.85);transform-origin:left'>Last modified by</div></div>
<div class=t style='left:397.00px;top:194.35px;font-size:6.47px;color:#b4b4b4;transform:scaleX(0.85);transform-origin:left;'>unknown</div>
<div class=b style='left:329.3px;top:203.375px;width:178.2px;height:8.875px;background:#7c7c7c;border-bottom:0.6px solid #737373;box-sizing:border-box;'></div>
<div class=b style='left:337.2px;top:203.375px;width:56.10px;height:8.875px;overflow:hidden'><div class=t style='left:1px;top:-0.15px;font-size:6.47px;color:#151515;transform:scaleX(0.85);transform-origin:left'>Last modified at</div></div>
<div class=t style='left:397.00px;top:203.22px;font-size:6.47px;color:#b4b4b4;transform:scaleX(0.85);transform-origin:left;'>unknown</div>
<div class=b style='left:329.3px;top:212.25px;width:178.2px;height:8.875px;background:#7c7c7c;border-bottom:0.6px solid #737373;box-sizing:border-box;'></div>
<svg width=1000 height=538><path d='M331.7 215.6 L334.8 215.6 L333.2 218.2Z' fill='#f4f4f4'/></svg>
<div class=b style='left:337.2px;top:212.25px;width:56.10px;height:8.875px;overflow:hidden'><div class=t style='left:1px;top:-0.15px;font-size:6.47px;color:#151515;transform:scaleX(0.85);transform-origin:left'>Items</div></div>
<div class=t style='left:397.00px;top:212.10px;font-size:6.47px;color:#151515;transform:scaleX(0.85);transform-origin:left;'></div>
<div class=b style='left:329.3px;top:221.125px;width:178.2px;height:8.875px;background:#7c7c7c;border-bottom:0.6px solid #737373;box-sizing:border-box;'></div>
<div class=b style='left:344.59999999999997px;top:221.125px;width:48.70px;height:8.875px;overflow:hidden'><div class=t style='left:1px;top:-0.15px;font-size:6.47px;color:#151515;transform:scaleX(0.85);transform-origin:left'>Name</div></div>
<div class=t style='left:397.00px;top:220.97px;font-size:6.47px;color:#151515;transform:scaleX(0.85);transform-origin:left;'>camera</div>
<div class=b style='left:500.6px;top:223.925px;width:5.7999999999999545px;height:3.799999999999983px;background:#858585;'></div>
<div class=b style='left:501.2px;top:225.025px;width:4.800000000000011px;height:2.0px;background:#3a3a3a;background-image:linear-gradient(90deg,#3a3a3a 0,#3a3a3a 1.2px,#555 1.2px,#555 1.6px);background-size:1.6px 100%;'></div>
<div class=b style='left:329.3px;top:230.0px;width:178.2px;height:8.875px;background:#7c7c7c;border-bottom:0.6px solid #737373;box-sizing:border-box;'></div>
<svg width=1000 height=538><path d='M339.1 233.3 L342.2 233.3 L340.6 236.0Z' fill='#f4f4f4'/></svg>
<div class=b style='left:344.59999999999997px;top:230.0px;width:48.70px;height:8.875px;overflow:hidden'><div class=t style='left:1px;top:-0.15px;font-size:6.47px;color:#151515;transform:scaleX(0.85);transform-origin:left'>Transform</div></div>
<div class=t style='left:397.00px;top:229.85px;font-size:6.47px;color:#151515;transform:scaleX(0.85);transform-origin:left;'></div>
<div class=b style='left:329.3px;top:238.875px;width:178.2px;height:8.875px;background:#7c7c7c;border-bottom:0.6px solid #737373;box-sizing:border-box;'></div>
<div class=b style='left:352.0px;top:238.875px;width:41.30px;height:8.875px;overflow:hidden'><div class=t style='left:1px;top:-0.15px;font-size:6.47px;color:#151515;transform:scaleX(0.85);transform-origin:left'>Position</div></div>
<div class=t style='left:397.00px;top:238.72px;font-size:6.47px;color:#151515;transform:scaleX(0.85);transform-origin:left;'>{12.03, 2.56, 14.81}</div>
<div class=b style='left:329.3px;top:247.75px;width:178.2px;height:8.875px;background:#7c7c7c;border-bottom:0.6px solid #737373;box-sizing:border-box;'></div>
<div class=b style='left:352.0px;top:247.75px;width:41.30px;height:8.875px;overflow:hidden'><div class=t style='left:1px;top:-0.15px;font-size:6.47px;color:#151515;transform:scaleX(0.85);transform-origin:left'>Rotation</div></div>
<div class=t style='left:397.00px;top:247.60px;font-size:6.47px;color:#151515;transform:scaleX(0.85);transform-origin:left;'>{0.0, 0.0, 0.0}</div>
<div class=b style='left:329.3px;top:256.625px;width:178.2px;height:8.875px;background:#7c7c7c;border-bottom:0.6px solid #737373;box-sizing:border-box;'></div>
<div class=b style='left:352.0px;top:256.625px;width:41.30px;height:8.875px;overflow:hidden'><div class=t style='left:1px;top:-0.15px;font-size:6.47px;color:#151515;transform:scaleX(0.85);transform-origin:left'>Scale</div></div>
<div class=t style='left:397.00px;top:256.48px;font-size:6.47px;color:#151515;transform:scaleX(0.85);transform-origin:left;'>{1.00, 1.00, 1.00}</div>
<div class=b style='left:329.3px;top:265.5px;width:178.2px;height:8.875px;background:#7c7c7c;border-bottom:0.6px solid #737373;box-sizing:border-box;'></div>
<div class=b style='left:344.59999999999997px;top:265.5px;width:48.70px;height:8.875px;overflow:hidden'><div class=t style='left:1px;top:-0.15px;font-size:6.47px;color:#151515;transform:scaleX(0.85);transform-origin:left'>Reference</div></div>
<div class=t style='left:397.00px;top:265.35px;font-size:6.47px;color:#151515;transform:scaleX(0.85);transform-origin:left;'>camera</div>
<div class=b style='left:500.6px;top:268.3px;width:5.7999999999999545px;height:3.8000000000000114px;background:#858585;'></div>
<div class=b style='left:501.2px;top:269.4px;width:4.800000000000011px;height:2.0px;background:#3a3a3a;background-image:linear-gradient(90deg,#3a3a3a 0,#3a3a3a 1.2px,#555 1.2px,#555 1.6px);background-size:1.6px 100%;'></div>
<div class=b style='left:329.3px;top:274.375px;width:178.2px;height:8.875px;background:#7c7c7c;border-bottom:0.6px solid #737373;box-sizing:border-box;'></div>
<svg width=1000 height=538><path d='M339.1 277.7 L342.2 277.7 L340.6 280.4Z' fill='#f4f4f4'/></svg>
<div class=b style='left:344.59999999999997px;top:274.375px;width:48.70px;height:8.875px;overflow:hidden'><div class=t style='left:1px;top:-0.15px;font-size:6.47px;color:#151515;transform:scaleX(0.85);transform-origin:left'>Flags</div></div>
<div class=t style='left:397.00px;top:274.23px;font-size:6.47px;color:#151515;transform:scaleX(0.85);transform-origin:left;'></div>
<div class=b style='left:329.3px;top:283.25px;width:178.2px;height:8.875px;background:#7c7c7c;border-bottom:0.6px solid #737373;box-sizing:border-box;'></div>
<div class=b style='left:352.0px;top:283.25px;width:41.30px;height:8.875px;overflow:hidden'><div class=t style='left:1px;top:-0.15px;font-size:6.47px;color:#151515;transform:scaleX(0.85);transform-origin:left'>Motionable</div></div>
<svg width=1000 height=538><path d='M397.3 287.6 L398.8 289.1 L401.6 285.9' stroke='#111' stroke-width='1.1' fill='none'/></svg>
<div class=b style='left:329.3px;top:292.125px;width:178.2px;height:8.875px;background:#7c7c7c;border-bottom:0.6px solid #737373;box-sizing:border-box;'></div>
<svg width=1000 height=538><path d='M339.1 295.4 L342.2 295.4 L340.6 298.1Z' fill='#f4f4f4'/></svg>
<div class=b style='left:344.59999999999997px;top:292.125px;width:48.70px;height:8.875px;overflow:hidden'><div class=t style='left:1px;top:-0.15px;font-size:6.47px;color:#151515;transform:scaleX(0.85);transform-origin:left'>Motion</div></div>
<div class=t style='left:397.00px;top:291.98px;font-size:6.47px;color:#151515;transform:scaleX(0.85);transform-origin:left;'></div>
<div class=b style='left:329.3px;top:301.0px;width:178.2px;height:8.875px;background:#7c7c7c;border-bottom:0.6px solid #737373;box-sizing:border-box;'></div>
<div class=b style='left:352.0px;top:301.0px;width:41.30px;height:8.875px;overflow:hidden'><div class=t style='left:1px;top:-0.15px;font-size:6.47px;color:#151515;transform:scaleX(0.85);transform-origin:left'>Hint</div></div>
<div class=t style='left:397.00px;top:300.85px;font-size:6.47px;color:#b4b4b4;transform:scaleX(0.85);transform-origin:left;'>Make KEY only on Parent CS</div>
<div class=b style='left:329.3px;top:309.875px;width:178.2px;height:8.875px;background:#7c7c7c;border-bottom:0.6px solid #737373;box-sizing:border-box;'></div>
<div class=b style='left:352.0px;top:309.875px;width:41.30px;height:8.875px;overflow:hidden'><div class=t style='left:1px;top:-0.15px;font-size:6.47px;color:#151515;transform:scaleX(0.85);transform-origin:left'>Files</div></div>
<div class=b style='left:396.2px;top:310.475px;width:54.80000000000001px;height:7.6749999999999545px;background:#7e7e7e;border-top:0.6px solid #8f8f8f;border-left:0.6px solid #8f8f8f;border-bottom:0.6px solid #6c6c6c;border-right:0.6px solid #6c6c6c;box-sizing:border-box;'></div>
<div class=t style='left:397.80px;top:309.73px;font-size:6.47px;color:#151515;transform:scaleX(0.85);transform-origin:left;'>Import</div>
<div class=b style='left:452px;top:310.475px;width:53.89999999999998px;height:7.6749999999999545px;background:#7e7e7e;border-top:0.6px solid #8f8f8f;border-left:0.6px solid #8f8f8f;border-bottom:0.6px solid #6c6c6c;border-right:0.6px solid #6c6c6c;box-sizing:border-box;'></div>
<div class=t style='left:453.60px;top:309.73px;font-size:6.47px;color:#151515;transform:scaleX(0.85);transform-origin:left;'>Export</div>
<div class=b style='left:329.3px;top:318.75px;width:178.2px;height:8.875px;background:#7c7c7c;border-bottom:0.6px solid #737373;box-sizing:border-box;'></div>
<div class=b style='left:352.0px;top:318.75px;width:41.30px;height:8.875px;overflow:hidden'><div class=t style='left:1px;top:-0.15px;font-size:6.47px;color:#151515;transform:scaleX(0.85);transform-origin:left'>Commands</div></div>
<div class=b style='left:396.2px;top:319.35px;width:20.600000000000023px;height:7.6749999999999545px;background:#7e7e7e;border-top:0.6px solid #8f8f8f;border-left:0.6px solid #8f8f8f;border-bottom:0.6px solid #6c6c6c;border-right:0.6px solid #6c6c6c;box-sizing:border-box;'></div>
<div class=t style='left:397.80px;top:318.60px;font-size:6.47px;color:#151515;transform:scaleX(0.85);transform-origin:left;'>+ K</div>
<div class=b style='left:418px;top:319.35px;width:21.399999999999977px;height:7.6749999999999545px;background:#7e7e7e;border-top:0.6px solid #8f8f8f;border-left:0.6px solid #8f8f8f;border-bottom:0.6px solid #6c6c6c;border-right:0.6px solid #6c6c6c;box-sizing:border-box;'></div>
<div class=t style='left:419.60px;top:318.60px;font-size:6.47px;color:#151515;transform:scaleX(0.85);transform-origin:left;'>- K</div>
<div class=b style='left:440.5px;top:319.35px;width:20.19999999999999px;height:7.6749999999999545px;background:#7e7e7e;border-top:0.6px solid #8f8f8f;border-left:0.6px solid #8f8f8f;border-bottom:0.6px solid #6c6c6c;border-right:0.6px solid #6c6c6c;box-sizing:border-box;'></div>
<div class=t style='left:442.10px;top:318.60px;font-size:6.47px;color:#151515;transform:scaleX(0.85);transform-origin:left;'>Scale</div>
<div class=b style='left:462px;top:319.35px;width:21.30000000000001px;height:7.6749999999999545px;background:#7e7e7e;border-top:0.6px solid #8f8f8f;border-left:0.6px solid #8f8f8f;border-bottom:0.6px solid #6c6c6c;border-right:0.6px solid #6c6c6c;box-sizing:border-box;'></div>
<div class=t style='left:463.60px;top:318.60px;font-size:6.47px;color:#151515;transform:scaleX(0.85);transform-origin:left;'>Norm</div>
<div class=b style='left:484.5px;top:319.35px;width:21.399999999999977px;height:7.6749999999999545px;background:#7e7e7e;border-top:0.6px solid #8f8f8f;border-left:0.6px solid #8f8f8f;border-bottom:0.6px solid #6c6c6c;border-right:0.6px solid #6c6c6c;box-sizing:border-box;'></div>
<div class=t style='left:486.10px;top:318.60px;font-size:6.47px;color:#151515;transform:scaleX(0.85);transform-origin:left;'>Clamp</div>
<div class=b style='left:329.3px;top:327.625px;width:178.2px;height:8.875px;background:#7c7c7c;border-bottom:0.6px solid #737373;box-sizing:border-box;'></div>
<div class=b style='left:352.0px;top:327.625px;width:41.30px;height:8.875px;overflow:hidden'><div class=t style='left:1px;top:-0.15px;font-size:6.47px;color:#151515;transform:scaleX(0.85);transform-origin:left'>Controls</div></div>
<div class=b style='left:396.2px;top:328.225px;width:12.899999999999977px;height:7.6749999999999545px;background:#7e7e7e;border-top:0.6px solid #8f8f8f;border-left:0.6px solid #8f8f8f;border-bottom:0.6px solid #6c6c6c;border-right:0.6px solid #6c6c6c;box-sizing:border-box;'></div>
<div class=t style='left:397.80px;top:327.48px;font-size:6.47px;color:#151515;transform:scaleX(0.85);transform-origin:left;'>|&lt;&lt;</div>
<div class=b style='left:409.9px;top:328.225px;width:12.899999999999977px;height:7.6749999999999545px;background:#7e7e7e;border-top:0.6px solid #8f8f8f;border-left:0.6px solid #8f8f8f;border-bottom:0.6px solid #6c6c6c;border-right:0.6px solid #6c6c6c;box-sizing:border-box;'></div>
<div class=t style='left:411.50px;top:327.48px;font-size:6.47px;color:#151515;transform:scaleX(0.85);transform-origin:left;'>+&lt;&lt;</div>
<div class=b style='left:423.59999999999997px;top:328.225px;width:12.899999999999977px;height:7.6749999999999545px;background:#7e7e7e;border-top:0.6px solid #8f8f8f;border-left:0.6px solid #8f8f8f;border-bottom:0.6px solid #6c6c6c;border-right:0.6px solid #6c6c6c;box-sizing:border-box;'></div>
<div class=t style='left:425.20px;top:327.48px;font-size:6.47px;color:#151515;transform:scaleX(0.85);transform-origin:left;'>&lt;&lt;</div>
<div class=b style='left:437.29999999999995px;top:328.225px;width:12.900000000000034px;height:7.6749999999999545px;background:#7e7e7e;border-top:0.6px solid #8f8f8f;border-left:0.6px solid #8f8f8f;border-bottom:0.6px solid #6c6c6c;border-right:0.6px solid #6c6c6c;box-sizing:border-box;'></div>
<div class=t style='left:438.90px;top:327.48px;font-size:6.47px;color:#151515;transform:scaleX(0.85);transform-origin:left;'>&gt;</div>
<div class=b style='left:451.0px;top:328.225px;width:12.899999999999977px;height:7.6749999999999545px;background:#7e7e7e;border-top:0.6px solid #8f8f8f;border-left:0.6px solid #8f8f8f;border-bottom:0.6px solid #6c6c6c;border-right:0.6px solid #6c6c6c;box-sizing:border-box;'></div>
<div class=t style='left:452.60px;top:327.48px;font-size:6.47px;color:#151515;transform:scaleX(0.85);transform-origin:left;'>||</div>
<div class=b style='left:464.7px;top:328.225px;width:12.899999999999977px;height:7.6749999999999545px;background:#7e7e7e;border-top:0.6px solid #8f8f8f;border-left:0.6px solid #8f8f8f;border-bottom:0.6px solid #6c6c6c;border-right:0.6px solid #6c6c6c;box-sizing:border-box;'></div>
<div class=t style='left:466.30px;top:327.48px;font-size:6.47px;color:#151515;transform:scaleX(0.85);transform-origin:left;'>&gt;&gt;</div>
<div class=b style='left:478.4px;top:328.225px;width:12.899999999999977px;height:7.6749999999999545px;background:#7e7e7e;border-top:0.6px solid #8f8f8f;border-left:0.6px solid #8f8f8f;border-bottom:0.6px solid #6c6c6c;border-right:0.6px solid #6c6c6c;box-sizing:border-box;'></div>
<div class=t style='left:480.00px;top:327.48px;font-size:6.47px;color:#151515;transform:scaleX(0.85);transform-origin:left;'>&gt;&gt;+</div>
<div class=b style='left:492.09999999999997px;top:328.225px;width:12.899999999999977px;height:7.6749999999999545px;background:#7e7e7e;border-top:0.6px solid #8f8f8f;border-left:0.6px solid #8f8f8f;border-bottom:0.6px solid #6c6c6c;border-right:0.6px solid #6c6c6c;box-sizing:border-box;'></div>
<div class=t style='left:493.70px;top:327.48px;font-size:6.47px;color:#151515;transform:scaleX(0.85);transform-origin:left;'>&gt;&gt;|</div>
<div class=b style='left:329.3px;top:336.5px;width:178.2px;height:8.875px;background:#7c7c7c;border-bottom:0.6px solid #737373;box-sizing:border-box;'></div>
<svg width=1000 height=538><path d='M346.5 339.8 L349.6 339.8 L348.1 342.5Z' fill='#f4f4f4'/></svg>
<div class=b style='left:352.0px;top:336.5px;width:41.30px;height:8.875px;overflow:hidden'><div class=t style='left:1px;top:-0.15px;font-size:6.47px;color:#151515;transform:scaleX(0.85);transform-origin:left'>Flags</div></div>
<div class=t style='left:397.00px;top:336.35px;font-size:6.47px;color:#151515;transform:scaleX(0.85);transform-origin:left;'></div>
<div class=b style='left:329.3px;top:345.375px;width:178.2px;height:8.875px;background:#7c7c7c;border-bottom:0.6px solid #737373;box-sizing:border-box;'></div>
<div class=b style='left:359.4px;top:345.375px;width:33.90px;height:8.875px;overflow:hidden'><div class=t style='left:1px;top:-0.15px;font-size:6.47px;color:#151515;transform:scaleX(0.85);transform-origin:left'>Auto Key</div></div>
<svg width=1000 height=538><path d='M397.3 349.8 L398.8 351.3 L401.6 348.0' stroke='#111' stroke-width='1.1' fill='none'/></svg>
<div class=b style='left:329.3px;top:354.25px;width:178.2px;height:8.875px;background:#7c7c7c;border-bottom:0.6px solid #737373;box-sizing:border-box;'></div>
<div class=b style='left:359.4px;top:354.25px;width:33.90px;height:8.875px;overflow:hidden'><div class=t style='left:1px;top:-0.15px;font-size:6.47px;color:#151515;transform:scaleX(0.85);transform-origin:left'>Camera View</div></div>
<div class=b style='left:397.9px;top:357.95px;width:1.6000000000000227px;height:1.6000000000000227px;background:#111;border-radius:50%;'></div>
<div class=b style='left:329.3px;top:363.125px;width:178.2px;height:8.875px;background:#7c7c7c;border-bottom:0.6px solid #737373;box-sizing:border-box;'></div>
<div class=b style='left:352.0px;top:363.125px;width:41.30px;height:8.875px;overflow:hidden'><div class=t style='left:1px;top:-0.15px;font-size:6.47px;color:#151515;transform:scaleX(0.85);transform-origin:left'>Start Frame (sec)</div></div>
<div class=t style='left:397.00px;top:362.98px;font-size:6.47px;color:#151515;transform:scaleX(0.85);transform-origin:left;'>0.000</div>
<div class=b style='left:329.3px;top:372.0px;width:178.2px;height:8.875px;background:#7c7c7c;border-bottom:0.6px solid #737373;box-sizing:border-box;'></div>
<div class=b style='left:352.0px;top:372.0px;width:41.30px;height:8.875px;overflow:hidden'><div class=t style='left:1px;top:-0.15px;font-size:6.47px;color:#151515;transform:scaleX(0.85);transform-origin:left'>End Frame (sec)</div></div>
<div class=t style='left:397.00px;top:371.85px;font-size:6.47px;color:#151515;transform:scaleX(0.85);transform-origin:left;'>6.000</div>
<div class=b style='left:329.3px;top:380.875px;width:178.2px;height:8.875px;background:#a3a3a3;border-bottom:0.6px solid #737373;box-sizing:border-box;'></div>
<div class=b style='left:352.0px;top:380.875px;width:41.30px;height:8.875px;overflow:hidden'><div class=t style='left:1px;top:-0.15px;font-size:6.47px;color:#151515;transform:scaleX(0.85);transform-origin:left'>Current Frame (sec)</div></div>
<div class=t style='left:397.00px;top:380.73px;font-size:6.47px;color:#151515;transform:scaleX(0.85);transform-origin:left;'>6.000</div>
<div class=b style='left:329.3px;top:389.75px;width:178.2px;height:8.875px;background:#7c7c7c;border-bottom:0.6px solid #737373;box-sizing:border-box;'></div>
<div class=b style='left:352.0px;top:389.75px;width:41.30px;height:8.875px;overflow:hidden'><div class=t style='left:1px;top:-0.15px;font-size:6.47px;color:#151515;transform:scaleX(0.85);transform-origin:left'>Key Count</div></div>
<div class=t style='left:397.00px;top:389.60px;font-size:6.47px;color:#b4b4b4;transform:scaleX(0.85);transform-origin:left;'>2</div>
<div class=b style='left:329.3px;top:398.625px;width:178.2px;height:8.875px;background:#7c7c7c;border-bottom:0.6px solid #737373;box-sizing:border-box;'></div>
<div class=b style='left:352.0px;top:398.625px;width:41.30px;height:8.875px;overflow:hidden'><div class=t style='left:1px;top:-0.15px;font-size:6.47px;color:#151515;transform:scaleX(0.85);transform-origin:left'>Length (sec)</div></div>
<div class=t style='left:397.00px;top:398.48px;font-size:6.47px;color:#b4b4b4;transform:scaleX(0.85);transform-origin:left;'>6.00</div>
<div class=b style='left:393.3px;top:194.5px;width:0.8000000000000114px;height:310.5px;background:#747474;'></div>
<div class=b style='left:507.2px;top:194.5px;width:0.8000000000000114px;height:310.5px;background:#747474;'></div>
</body></html>
